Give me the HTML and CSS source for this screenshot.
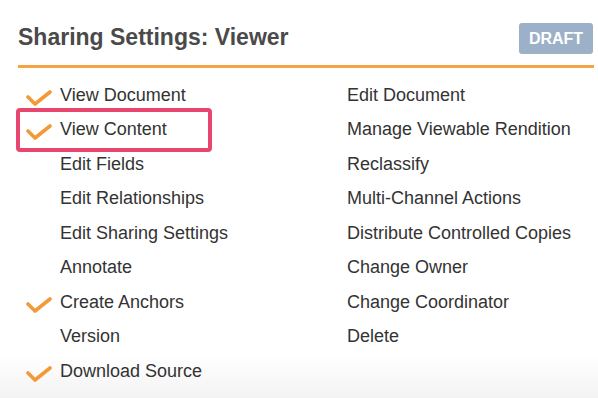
FILE: index.html
```html
<html>
<head>
	<title>Sharing Settings</title>
	<meta http-equiv="Content-Type" content="text/html; charset=utf-8" />
	<link rel="stylesheet" href="styles.css">
</head>
<body>
	<div class="panel">
		<div class="head">
			<h2>Sharing Settings: Viewer</h2>
			<span class="badge">DRAFT</span>
		</div>
		<div class="perms">
			<div class="col">
				<div class="item on"><span class="tick"><svg viewBox="0 0 26 16" width="26" height="16"><path d="M2 7 L9 14 L24 2" /></svg></span>View Document</div>
				<div class="item on mark"><span class="tick"><svg viewBox="0 0 26 16" width="26" height="16"><path d="M2 7 L9 14 L24 2" /></svg></span>View Content</div>
				<div class="item"><span class="tick"></span>Edit Fields</div>
				<div class="item"><span class="tick"></span>Edit Relationships</div>
				<div class="item"><span class="tick"></span>Edit Sharing Settings</div>
				<div class="item"><span class="tick"></span>Annotate</div>
				<div class="item on"><span class="tick"><svg viewBox="0 0 26 16" width="26" height="16"><path d="M2 7 L9 14 L24 2" /></svg></span>Create Anchors</div>
				<div class="item"><span class="tick"></span>Version</div>
				<div class="item on"><span class="tick"><svg viewBox="0 0 26 16" width="26" height="16"><path d="M2 7 L9 14 L24 2" /></svg></span>Download Source</div>
			</div>
			<div class="col">
				<div class="item">Edit Document</div>
				<div class="item">Manage Viewable Rendition</div>
				<div class="item">Reclassify</div>
				<div class="item">Multi-Channel Actions</div>
				<div class="item">Distribute Controlled Copies</div>
				<div class="item">Change Owner</div>
				<div class="item">Change Coordinator</div>
				<div class="item">Delete</div>
			</div>
		</div>
	</div>
</body>
</html>
```

FILE: styles.css
```css
*{
	margin: 0;
	padding: 0;
	box-sizing: border-box;
}
body{
	min-height: 100vh;
	font-family: "Liberation Sans", Arial, sans-serif;
	background: linear-gradient(to bottom, #ffffff 355px, #f3f3f3 398px);
}
.panel{
	width: 576px;
	margin-left: 18px;
	padding-top: 23px;
}
.head{
	display: flex;
	justify-content: space-between;
	align-items: center;
	height: 31px;
	margin-bottom: 11px;
	padding-right: 1px;
}
.head > h2{
	font-size: 23px;
	font-weight: bold;
	color: #4a4a4a;
	margin-top: -3px;
}
.badge{
	display: flex;
	align-items: center;
	justify-content: center;
	width: 74px;
	height: 31px;
	border-radius: 3px;
	background-color: #9cb1c7;
	color: #ffffff;
	font-size: 16px;
	font-weight: bold;
}
.perms{
	display: grid;
	grid-template-columns: 329px 1fr;
	border-top: 3px solid #f5a443;
	padding-top: 10px;
}
.item{
	position: relative;
	display: flex;
	align-items: center;
	height: 34.5px;
	font-size: 18px;
	color: #333333;
}
.tick{
	display: flex;
	align-items: center;
	width: 42px;
	height: 100%;
	padding-left: 8px;
	padding-top: 5px;
}
.tick path{
	fill: none;
	stroke: #f29a38;
	stroke-width: 3.6;
	stroke-linecap: round;
	stroke-linejoin: round;
}
.mark::after{
	content: "";
	box-sizing: border-box;
	position: absolute;
	left: -2px;
	top: -5px;
	width: 196px;
	height: 44px;
	border: 4px solid #e8466f;
	border-radius: 4px;
}
```
